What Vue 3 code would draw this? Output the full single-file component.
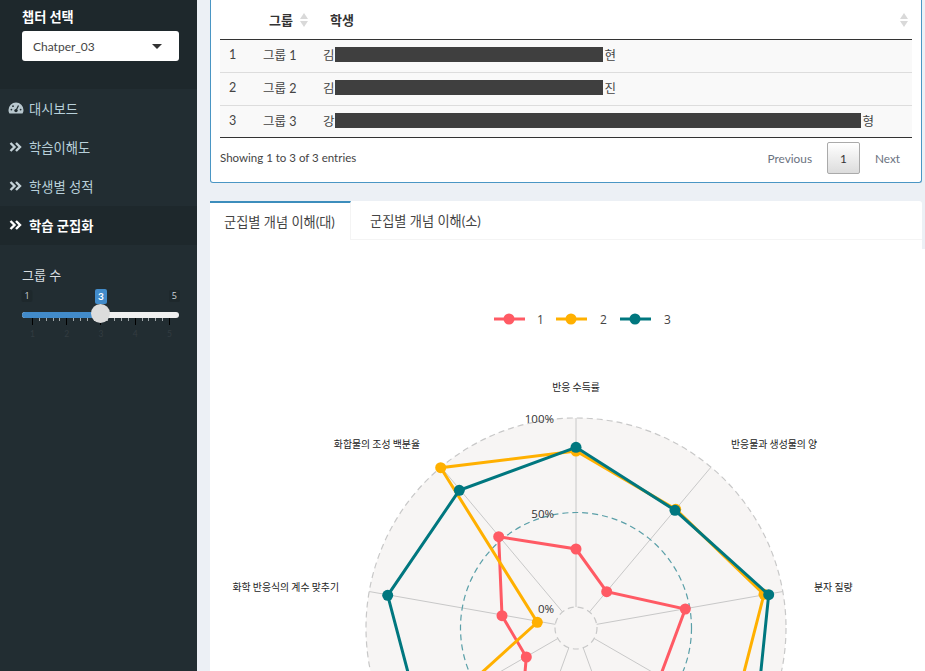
<script setup>
const cx = 576, cy = 628
const angles = [0, 40, 80, 120, 160, 200, 240, 280, 320]
const rad = (a) => (a * Math.PI) / 180
const spokes = angles.map((a) => ({
  x1: cx + 21 * Math.sin(rad(a)), y1: cy - 21 * Math.cos(rad(a)),
  x2: cx + 210 * Math.sin(rad(a)), y2: cy - 210 * Math.cos(rad(a))
}))
const series = [
  { color: '#ff5a64', pts: [[576,549],[606.7,591.7],[685.3,609],[660,677],[524.6,677],[526.3,657],[502,615.7],[498.7,536.7]], dots: [[576,549],[606.7,591.7],[685.3,609],[526.3,657],[502,615.7],[498.7,536.7]] },
  { color: '#ffb000', pts: [[576,451],[675.7,509.3],[764,594.3],[742,680],[478,676],[537.3,622.3],[440.7,467.7]], dots: [[576,451],[675.7,509.3],[764,594.3],[537.3,622.3],[440.7,467.7]] },
  { color: '#00777f', pts: [[576,447.3],[675,510.3],[768.7,594.7],[760,680],[410,680],[387.7,595.3],[459.3,490.3]], dots: [[576,447.3],[675,510.3],[768.7,594.7],[387.7,595.3],[459.3,490.3]] }
]
const poly = (p) => p.map((q) => q.join(',')).join(' ')
const menu = ['학습이해도', '학생별 성적']
const rows = [
  { n: 1, g: '그룹 1', a: '김', b: '현', w: 268 },
  { n: 2, g: '그룹 2', a: '김', b: '진', w: 268 },
  { n: 3, g: '그룹 3', a: '강', b: '형', w: 526 }
]
const minor = Array.from({ length: 21 }, (_, i) => i)
const legend = [['1', '#ff5a64', 494, 537], ['2', '#ffb000', 556, 600], ['3', '#00777f', 620, 664]]
</script>

<template>
  <div class="page">
    <aside class="side">
      <div class="top">
        <div class="lbl">챕터 선택</div>
        <div class="select"><span>Chatper_03</span><i class="caret"></i></div>
      </div>
      <nav class="menu">
        <a class="item dash">
          <svg class="ico" width="16" height="14" viewBox="0 0 16 14"><path d="M8 1.5A7.5 7.5 0 0 0 .5 9c0 1.4.4 2.7 1 3.6h13c.6-.9 1-2.2 1-3.6A7.5 7.5 0 0 0 8 1.5z" fill="#b8c7ce"/><circle cx="8" cy="9.6" r="1.7" fill="#222d32"/><path d="M8 9.6 10.5 4.6" stroke="#222d32" stroke-width="1.2"/><circle cx="3.4" cy="8.6" r=".9" fill="#222d32"/><circle cx="5" cy="5.2" r=".9" fill="#222d32"/><circle cx="12.6" cy="8.6" r=".9" fill="#222d32"/></svg>
          <span>대시보드</span>
        </a>
        <a v-for="m in menu" :key="m" class="item">
          <svg class="ico" width="16" height="14" viewBox="0 0 16 14"><path d="M2.5 3 6.5 7l-4 4M8 3l4 4-4 4" fill="none" stroke="#c4d2d8" stroke-width="2.4"/></svg>
          <span>{{ m }}</span>
        </a>
        <a class="item active">
          <svg class="ico" width="16" height="14" viewBox="0 0 16 14"><path d="M2.5 3 6.5 7l-4 4M8 3l4 4-4 4" fill="none" stroke="#fff" stroke-width="2.4"/></svg>
          <span>학습 군집화</span>
        </a>
      </nav>
      <div class="slider">
        <div class="lbl2">그룹 수</div>
        <div class="track-wrap">
          <span class="edge l">1</span>
          <span class="bubble">3</span>
          <span class="edge r">5</span>
          <div class="track"><div class="fill"></div></div>
          <div class="ticks">
            <i v-for="t in minor" :key="t" :class="{ big: t % 5 === 0 }"></i>
          </div>
          <div class="thumb"></div>
          <div class="nums"><span v-for="n in 5" :key="n">{{ n }}</span></div>
        </div>
      </div>
    </aside>

    <main class="main">
      <section class="box">
        <div class="tbl">
          <div class="head">
            <div class="c-n"></div>
            <div class="c-g">그룹<span class="sort"><i class="up"></i><i class="dn"></i></span></div>
            <div class="c-s">학생<span class="sort"><i class="up"></i><i class="dn"></i></span></div>
          </div>
          <div v-for="r in rows" :key="r.n" class="row">
            <div class="c-n">{{ r.n }}</div>
            <div class="c-g2">{{ r.g }}</div>
            <div class="c-s2">{{ r.a }}<span class="mask" :style="{ width: r.w + 'px' }"></span>{{ r.b }}</div>
          </div>
        </div>
        <div class="foot">
          <div class="info">Showing 1 to 3 of 3 entries</div>
          <div class="pager"><span>Previous</span><b>1</b><span class="next">Next</span></div>
        </div>
      </section>

      <section class="tabs">
        <div class="tabbar">
          <div class="tab on">군집별 개념 이해(대)</div>
          <div class="tab">군집별 개념 이해(소)</div>
        </div>
        <div class="chart">
          <svg class="radar" width="925" height="671" viewBox="0 0 925 671">
            <circle :cx="cx" :cy="cy" r="210" fill="#f7f5f4" stroke="#c8c8c8" stroke-width="1.2" stroke-dasharray="6 4"/>
            <circle :cx="cx" :cy="cy" r="21" fill="none" stroke="#c8c8c8" stroke-width="1.2" stroke-dasharray="6 4"/>
            <line v-for="(s, i) in spokes" :key="i" :x1="s.x1" :y1="s.y1" :x2="s.x2" :y2="s.y2" stroke="#c8c8c8" stroke-width="1"/>
            <circle :cx="cx" :cy="cy" r="115.5" fill="none" stroke="#5a9fa8" stroke-width="1.2" stroke-dasharray="6 4"/>
            <g v-for="s in series" :key="s.color">
              <polygon :points="poly(s.pts)" fill="none" :stroke="s.color" stroke-width="3"/>
              <circle v-for="(d, i) in s.dots" :key="i" :cx="d[0]" :cy="d[1]" r="5.5" :fill="s.color"/>
            </g>
            <g class="pct">
              <text x="554" y="423" text-anchor="end">100%</text>
              <text x="554" y="518" text-anchor="end">50%</text>
              <text x="554" y="613" text-anchor="end">0%</text>
            </g>
            <g class="axis">
              <text x="576" y="391" text-anchor="middle">반응 수득률</text>
              <text x="731" y="448">반응물과 생성물의 양</text>
              <text x="814" y="591">분자 질량</text>
              <text x="420" y="448" text-anchor="end">화합물의 조성 백분율</text>
              <text x="339" y="591" text-anchor="end">화학 반응식의 계수 맞추기</text>
            </g>
            <g v-for="l in legend" :key="l[0]">
              <line :x1="l[2]" y1="319" :x2="l[2] + 31" y2="319" :stroke="l[1]" stroke-width="3"/>
              <circle :cx="l[2] + 15" cy="319" r="5.5" :fill="l[1]"/>
              <text class="leg" :x="l[3]" y="323.5">{{ l[0] }}</text>
            </g>
          </svg>
        </div>
      </section>
    </main>
  </div>
</template>

<style>
html, body { margin: 0; height: 100%; overflow: hidden; background: #ecf0f5; }
</style>

<style scoped>
.page { display: flex; width: 925px; height: 671px; overflow: hidden; font-family: Lato, "Noto Sans CJK KR", sans-serif; font-size: 12px; color: #333; }
.side { width: 197px; flex: none; background: #222d32; }
.top { height: 89px; background: #1e282c; padding: 9px 18px 0 22px; box-sizing: border-box; }
.lbl { color: #fff; font-weight: 700; font-size: 13.2px; line-height: 17px; }
.select { margin-top: 5px; width: 157px; height: 30px; background: #fff; border-radius: 3px; display: flex; align-items: center; justify-content: space-between; padding: 0 17px 0 11px; box-sizing: border-box; color: #444; font-size: 12px; }
.caret { border-left: 5px solid transparent; border-right: 5px solid transparent; border-top: 5px solid #333; }
.item { display: flex; align-items: center; height: 39px; box-sizing: border-box; padding: 0 0 1px 8px; color: #b8d0da; font-size: 13.3px; }
.item .ico { width: 16px; margin-right: 5px; flex: none; }
.item.active { background: #1e282c; color: #fff; font-weight: 600; }
.slider { padding: 22px 18px 0 22px; }
.lbl2 { color: #d8dee1; font-size: 13px; line-height: 17px; }
.track-wrap { position: relative; height: 56px; margin-top: 5px; }
.edge { position: absolute; top: 1px; font-size: 9px; color: #ccd3d6; background: #1e282c; padding: 0 3px; border-radius: 2px; line-height: 12px; font-family: "Open Sans", sans-serif; }
.edge.l { transform: translateX(-50%); left: 5px; }
.edge.r { right: -1px; }
.bubble { position: absolute; left: 73px; top: 0; width: 12px; height: 15px; line-height: 15px; text-align: center; background: #428bca; color: #fff; font-size: 10px; font-weight: 700; border-radius: 2px; }
.track { position: absolute; left: 0; top: 23px; width: 157px; height: 6px; border-radius: 4px; background: #f0f0f0; overflow: hidden; }
.fill { width: 72px; height: 100%; background: #428bca; }
.thumb { position: absolute; left: 69px; top: 15px; width: 19px; height: 19px; border-radius: 50%; background: #dcdcdc; }
.ticks { position: absolute; left: 10px; top: 29px; width: 138px; display: flex; justify-content: space-between; }
.ticks i { display: block; width: 1px; height: 3px; background: #a0a6a9; }
.ticks i.big { height: 7px; background: #000; }
.nums { position: absolute; left: 8px; top: 39px; width: 142px; display: flex; justify-content: space-between; font-size: 8.5px; line-height: 12px; color: #333c41; }
.main { position: relative; flex: 1; padding: 0 3px 0 13px; min-width: 0; }
.box { height: 183px; box-sizing: border-box; background: #fff; border: 1px solid #4a96c4; border-top: 0; border-radius: 0 0 3px 3px; padding: 0 9px; }
.head { height: 40px; box-sizing: border-box; border-bottom: 1px solid #333; display: flex; align-items: center; font-weight: 600; font-size: 13px; color: #333; position: relative; }
.head .c-n { width: 49px; }
.c-g { width: 61px; display: flex; align-items: center; }
.c-s { flex: 1; display: flex; align-items: center; justify-content: space-between; padding-right: 4px; }
.sort { display: inline-flex; flex-direction: column; gap: 2px; margin-left: 7px; }
.up { border-left: 4px solid transparent; border-right: 4px solid transparent; border-bottom: 6px solid #d9d9d9; display: block; }
.dn { border-left: 4px solid transparent; border-right: 4px solid transparent; border-top: 6px solid #d9d9d9; display: block; }
.row { height: 33px; box-sizing: border-box; padding-bottom: 3px; background: #f9f9f9; border-bottom: 1px solid #ddd; display: flex; align-items: center; font-size: 12.5px; color: #444; }
.row:last-child { height: 32px; padding-bottom: 2px; border-bottom: 1px solid #333; }
.row .c-n { width: 43px; padding-left: 9px; box-sizing: border-box; }
.c-g2 { width: 60px; }
.c-s2 { flex: 1; display: flex; align-items: center; }
.mask { height: 15px; background: #3f3f3f; display: block; margin: 0 2px 0 0; }
.foot { display: flex; justify-content: space-between; align-items: center; height: 40px; }
.info { color: #444; font-size: 11.5px; padding-bottom: 2px; }
.pager { display: flex; align-items: center; font-size: 11.8px; color: #6b7280; padding-right: 13px; gap: 15px; }
.next { width: 24px; white-space: nowrap; }
.pager b { font-weight: 400; color: #333; width: 33px; height: 32px; line-height: 32px; text-align: center; border: 1px solid #aaa; border-radius: 2px; background: linear-gradient(#fff, #dcdcdc); box-sizing: border-box; }
.tabs { margin-top: 18px; background: #fff; border-radius: 3px 3px 0 0; }
.tabbar { display: flex; height: 38px; border-bottom: 1px solid #f4f4f4; }
.tab { padding: 0 14px; display: flex; align-items: center; color: #444; font-size: 13.2px; white-space: nowrap; }
.tab.on { width: 141px; box-sizing: border-box; border-top: 2px solid #3c8dbc; border-right: 1px solid #f4f4f4; height: 39px; background: #fff; color: #444; }
.tab + .tab { padding-left: 19px; }
.chart { height: 431px; margin: 9px -3px 0 0; background: #fff; }
.radar { position: absolute; left: -197px; top: 0; pointer-events: none; }
.pct text { font-size: 11.5px; fill: #333; font-family: "Open Sans", sans-serif; }
.axis text { font-size: 9.9px; fill: #222; font-family: "Noto Sans CJK KR", sans-serif; }
.leg { font-size: 12px; fill: #444; font-family: "Open Sans", sans-serif; }
</style>
